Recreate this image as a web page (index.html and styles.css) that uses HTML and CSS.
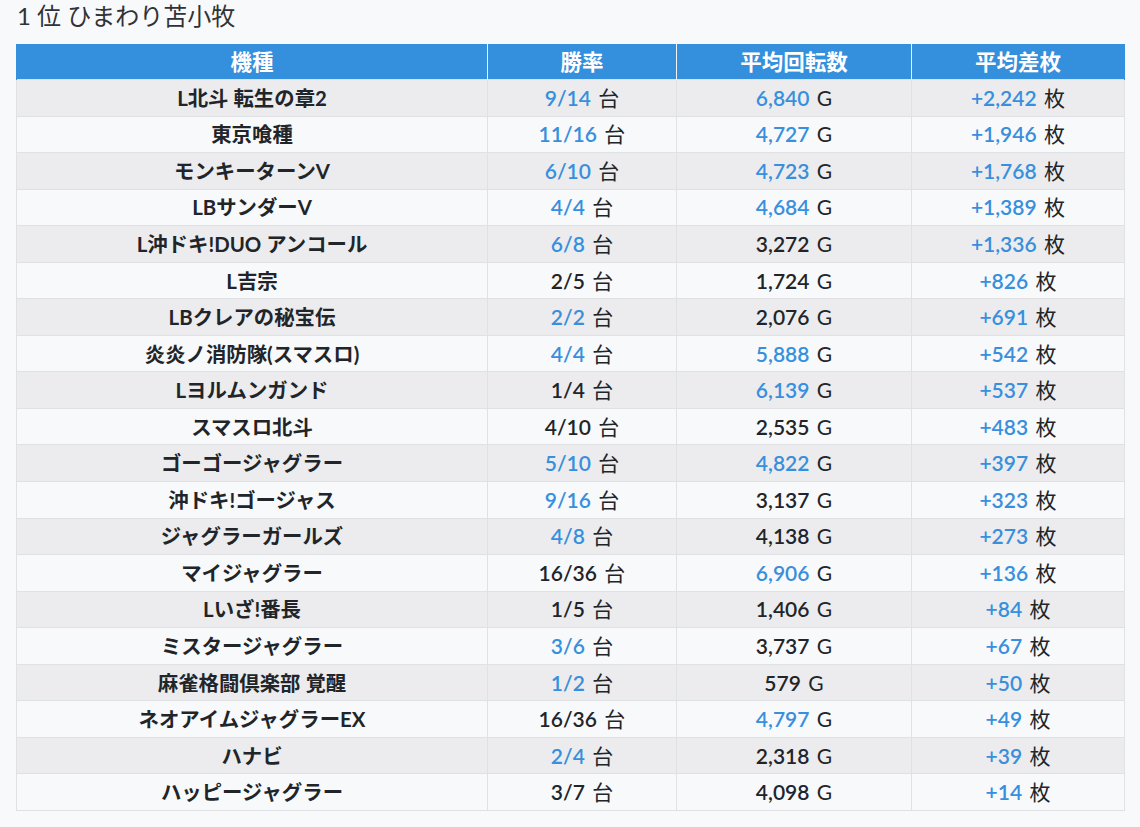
FILE: index.html
```html
<!DOCTYPE html>
<html lang="ja">
<head>
<meta charset="utf-8">
<title>1 位 ひまわり苫小牧</title>
<link rel="stylesheet" href="styles.css">
</head>
<body>
<h2 class="title">1 位 ひまわり苫小牧</h2>
<table class="rank">
<colgroup><col class="c-name"><col class="c-win"><col class="c-spin"><col class="c-diff"></colgroup>
<thead>
<tr><th>機種</th><th>勝率</th><th>平均回転数</th><th class="last">平均差枚</th></tr>
</thead>
<tbody>
<tr><td class="name">L北斗 転生の章2</td><td><span class="n hl">9/14</span> 台</td><td><span class="n hl">6,840</span> G</td><td><span class="n hl">+2,242</span> 枚</td></tr>
<tr><td class="name">東京喰種</td><td><span class="n hl">11/16</span> 台</td><td><span class="n hl">4,727</span> G</td><td><span class="n hl">+1,946</span> 枚</td></tr>
<tr><td class="name">モンキーターンV</td><td><span class="n hl">6/10</span> 台</td><td><span class="n hl">4,723</span> G</td><td><span class="n hl">+1,768</span> 枚</td></tr>
<tr><td class="name">LBサンダーV</td><td><span class="n hl">4/4</span> 台</td><td><span class="n hl">4,684</span> G</td><td><span class="n hl">+1,389</span> 枚</td></tr>
<tr><td class="name">L沖ドキ!DUO アンコール</td><td><span class="n hl">6/8</span> 台</td><td><span class="n">3,272</span> G</td><td><span class="n hl">+1,336</span> 枚</td></tr>
<tr><td class="name">L吉宗</td><td><span class="n">2/5</span> 台</td><td><span class="n">1,724</span> G</td><td><span class="n hl">+826</span> 枚</td></tr>
<tr><td class="name">LBクレアの秘宝伝</td><td><span class="n hl">2/2</span> 台</td><td><span class="n">2,076</span> G</td><td><span class="n hl">+691</span> 枚</td></tr>
<tr><td class="name">炎炎ノ消防隊(スマスロ)</td><td><span class="n hl">4/4</span> 台</td><td><span class="n hl">5,888</span> G</td><td><span class="n hl">+542</span> 枚</td></tr>
<tr><td class="name">Lヨルムンガンド</td><td><span class="n">1/4</span> 台</td><td><span class="n hl">6,139</span> G</td><td><span class="n hl">+537</span> 枚</td></tr>
<tr><td class="name">スマスロ北斗</td><td><span class="n">4/10</span> 台</td><td><span class="n">2,535</span> G</td><td><span class="n hl">+483</span> 枚</td></tr>
<tr><td class="name">ゴーゴージャグラー</td><td><span class="n hl">5/10</span> 台</td><td><span class="n hl">4,822</span> G</td><td><span class="n hl">+397</span> 枚</td></tr>
<tr><td class="name">沖ドキ!ゴージャス</td><td><span class="n hl">9/16</span> 台</td><td><span class="n">3,137</span> G</td><td><span class="n hl">+323</span> 枚</td></tr>
<tr><td class="name">ジャグラーガールズ</td><td><span class="n hl">4/8</span> 台</td><td><span class="n">4,138</span> G</td><td><span class="n hl">+273</span> 枚</td></tr>
<tr><td class="name">マイジャグラー</td><td><span class="n">16/36</span> 台</td><td><span class="n hl">6,906</span> G</td><td><span class="n hl">+136</span> 枚</td></tr>
<tr><td class="name">Lいざ!番長</td><td><span class="n">1/5</span> 台</td><td><span class="n">1,406</span> G</td><td><span class="n hl">+84</span> 枚</td></tr>
<tr><td class="name">ミスタージャグラー</td><td><span class="n hl">3/6</span> 台</td><td><span class="n">3,737</span> G</td><td><span class="n hl">+67</span> 枚</td></tr>
<tr><td class="name">麻雀格闘倶楽部 覚醒</td><td><span class="n hl">1/2</span> 台</td><td><span class="n">579</span> G</td><td><span class="n hl">+50</span> 枚</td></tr>
<tr><td class="name">ネオアイムジャグラーEX</td><td><span class="n">16/36</span> 台</td><td><span class="n hl">4,797</span> G</td><td><span class="n hl">+49</span> 枚</td></tr>
<tr><td class="name">ハナビ</td><td><span class="n hl">2/4</span> 台</td><td><span class="n">2,318</span> G</td><td><span class="n hl">+39</span> 枚</td></tr>
<tr><td class="name">ハッピージャグラー</td><td><span class="n">3/7</span> 台</td><td><span class="n">4,098</span> G</td><td><span class="n hl">+14</span> 枚</td></tr>
</tbody>
</table>
</body>
</html>
```

FILE: styles.css
```css
html, body {
  margin: 0;
  padding: 0;
  background: #f8f9fb;
}
body {
  padding: 0 16px;
  font-family: Lato, "Noto Sans CJK JP", sans-serif;
  color: #212529;
}
.title {
  margin: 0;
  padding: 1px 0 0 1px;
  height: 44px;
  box-sizing: border-box;
  font-size: 24px;
  font-weight: 400;
  line-height: 30px;
  color: #303236;
}
.rank {
  width: 1108px;
  border-collapse: collapse;
  table-layout: fixed;
  font-size: 21px;
}
.c-name { width: 471px; }
.c-win { width: 189px; }
.c-spin { width: 235px; }
.c-diff { width: 213px; }
.rank th, .rank td {
  border: 1px solid #dfe1e5;
  text-align: center;
  white-space: nowrap;
  box-sizing: border-box;
}
.rank th {
  background: #348fdc;
  color: #fff;
  font-weight: 700;
  font-size: 21.5px;
  height: 35px;
  padding: 0 8px;
  line-height: 28px;
  border-bottom: 0;
  border-top-color: #348fdc;
  border-left-color: #348fdc;
  border-right-color: #f0f4f8;
}
.rank th.last { border-right-color: #348fdc; }
.rank td {
  height: 36.55px;
  padding: 0 8px;
  line-height: 30px;
  font-weight: 400;
}
.rank tbody tr:nth-child(odd) td { background: #ececee; }
.rank tbody tr:nth-child(even) td { background: #f8f9fb; }
.rank td.name { font-weight: 700; font-size: 20.4px; }
.n { font-weight: 600; margin-right: 2px; }
.hl { color: #378fdd; }
```
